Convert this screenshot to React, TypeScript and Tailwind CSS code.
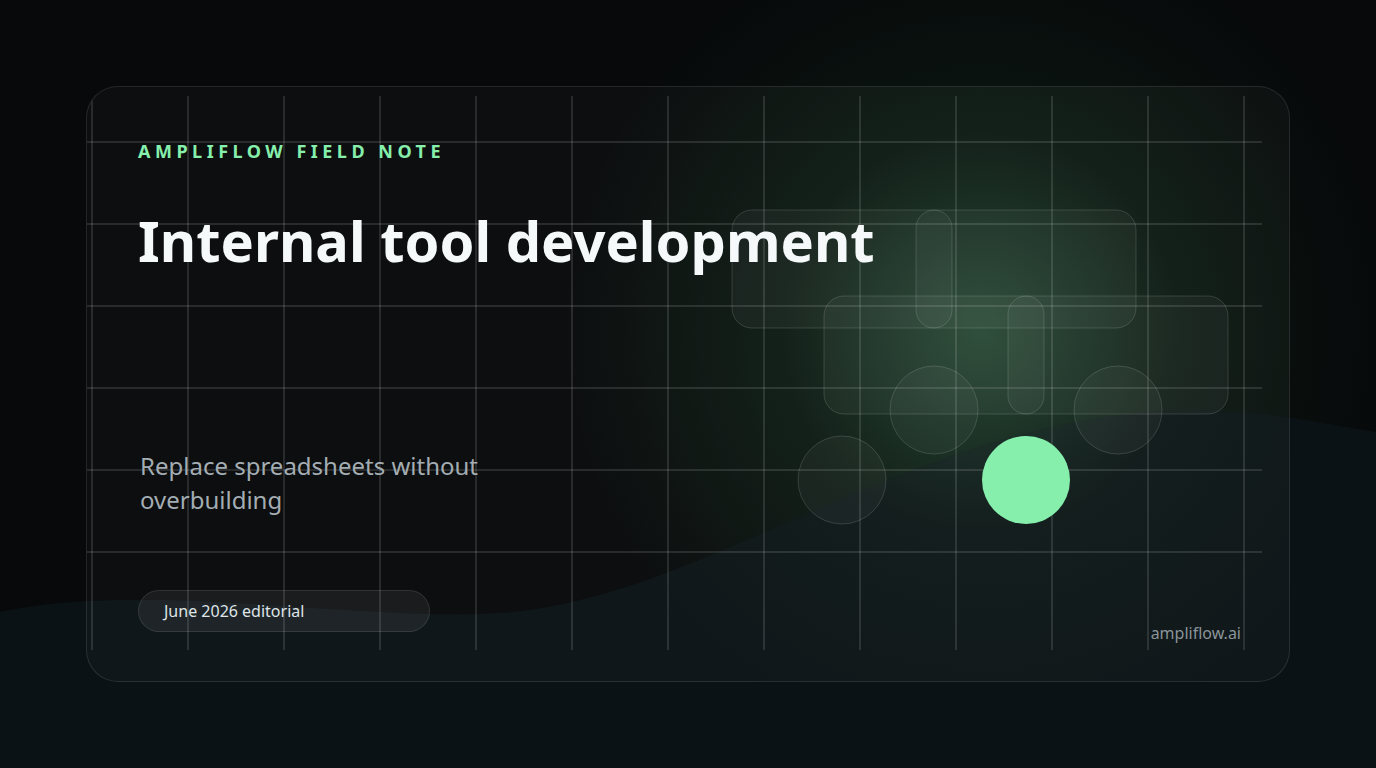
export default function App() {
  const vs = Array.from({ length: 13 }, (_, i) => 92 + i * 96);
  const hs = [142, 224, 306, 388, 470, 552];
  return (
    <div className="relative w-[1376px] h-[768px] overflow-hidden bg-[#07090a]" style={{ fontFamily: '"Noto Sans", "Open Sans", sans-serif' }}>
      <div className="absolute inset-0 bg-[radial-gradient(circle_at_980px_330px,rgba(74,222,128,0.10),transparent_420px)]" />
      <svg className="absolute inset-0" width="1376" height="768">
        <path d="M0 612 C150 580 350 622 500 613 C700 600 900 430 1150 412 C1250 405 1330 425 1376 432 V768 H0 Z" fill="#0b1215" />
      </svg>
      <div className="relative p-[86px]">
        <div className="relative w-[1204px] h-[596px] rounded-[32px] border border-white/10 bg-white/[0.025] overflow-hidden">
          <div className="absolute inset-0 bg-[radial-gradient(circle_at_894px_244px,rgba(80,140,100,0.35),rgba(40,70,50,0.15)_200px,transparent_420px)]" />
          <svg className="absolute left-[-87px] top-[-87px]" width="1376" height="768">
            {vs.map((x) => (
              <line key={x} x1={x} y1={96} x2={x} y2={650} stroke="rgba(255,255,255,0.16)" strokeWidth="1.5" />
            ))}
            {hs.map((y) => (
              <line key={y} x1={86} y1={y} x2={1262} y2={y} stroke="rgba(255,255,255,0.16)" strokeWidth="1.5" />
            ))}
            <g fill="rgba(255,255,255,0.04)" stroke="rgba(255,255,255,0.14)" strokeWidth="1">
              <rect x="732" y="210" width="404" height="118" rx="20" />
              <rect x="824" y="296" width="404" height="118" rx="20" />
              <rect x="916" y="210" width="36" height="118" rx="18" />
              <rect x="1008" y="296" width="36" height="118" rx="18" />
              <circle cx="934" cy="410" r="44" />
              <circle cx="1118" cy="410" r="44" />
              <circle cx="842" cy="480" r="44" />
            </g>
            <circle cx="1026" cy="480" r="44" fill="#86efac" />
          </svg>
          <div className="relative flex flex-col h-full pl-[51px] pr-[48px]">
            <div className="mt-[52px] text-[18px] font-bold tracking-[0.25em] text-[#86efac] leading-6">AMPLIFLOW FIELD NOTE</div>
            <h1 className="mt-[44px] text-[56px] font-bold text-[#f5f9fa] leading-[66px]">Internal tool development</h1>
            <p className="mt-[176px] ml-[2px] w-[360px] text-[24px] leading-[34px] text-[#a3adb3]">Replace spreadsheets without overbuilding</p>
            <div className="mt-auto mb-[49px] flex items-end justify-between">
              <div className="w-[292px] h-[42px] rounded-full border border-white/10 bg-white/[0.06] flex items-center pl-[25px] text-[16px] text-[#dfe5e8]">June 2026 editorial</div>
              <div className="mb-[-13px] text-[16px] text-[#8a9499]">ampliflow.ai</div>
            </div>
          </div>
        </div>
      </div>
    </div>
  );
}
